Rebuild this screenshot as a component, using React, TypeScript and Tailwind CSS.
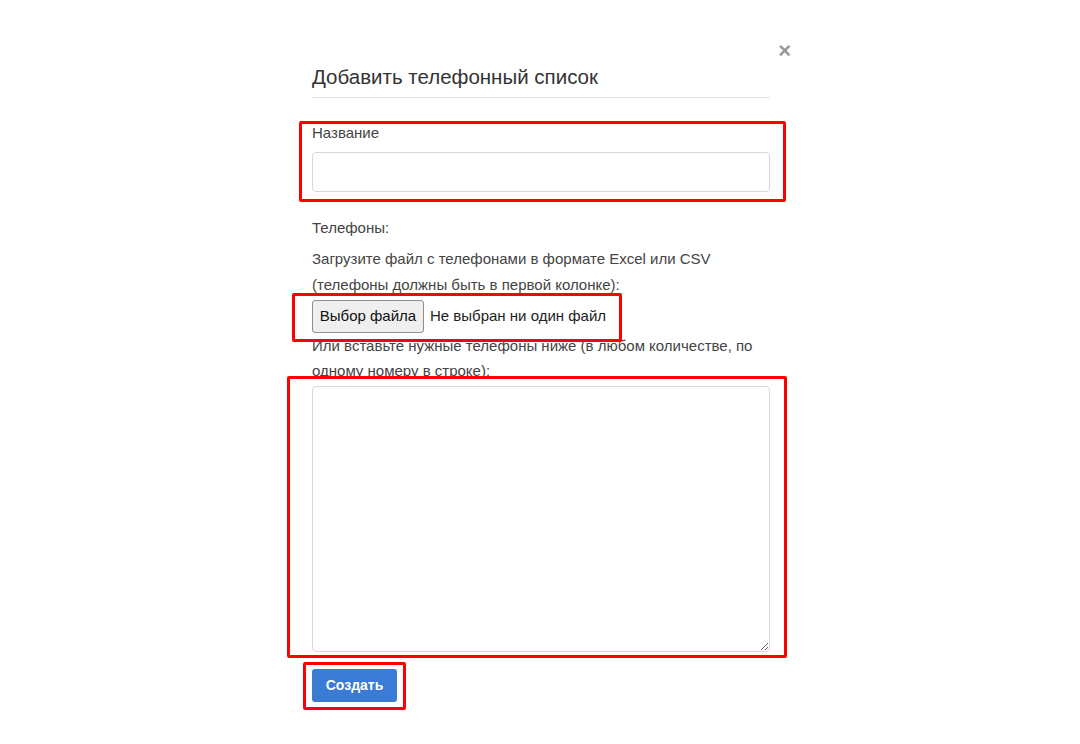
import React from 'react';

const font = { fontFamily: '"Liberation Sans", Arial, sans-serif' };

const App: React.FC = () => {
  return (
    <div className="relative w-[1080px] h-[744px] bg-white overflow-hidden" style={font}>
      <div className="ml-[312px] w-[486px] flex flex-col">
        {/* close */}
        <div className="mt-[40px] h-[22px] flex justify-end pr-[7px]">
          <span className="text-[22px] leading-[22px] font-bold text-[#999]">×</span>
        </div>

        <div className="w-[458px] flex flex-col">
          <h4 className="mt-[2px] text-[20.5px] leading-[26px] text-[#333]">Добавить телефонный список</h4>
          <div className="mt-[7px] border-t border-[#e5e5e5]" />

          <label className="mt-[25px] text-[15px] leading-[20px] text-[#444]">Название</label>
          <input
            type="text"
            className="mt-[9px] h-[40px] w-full rounded-[4px] border border-[#d5d8dc] outline-none px-3 text-[15px]"
          />

          <div className="mt-[26px] text-[15px] leading-[20px] text-[#444]">Телефоны:</div>
          <p className="mt-[8px] text-[15px] leading-[26px] text-[#444]">
            Загрузите файл с телефонами в формате Excel или CSV (телефоны должны быть в первой колонке):
          </p>

          {/* file picker */}
          <div className="mt-[2px] flex items-center h-[33px] text-[15px]">
            <button className="h-[33px] w-[112px] rounded-[3px] border border-[#8f8f8f] bg-[#efefef] text-[15px] text-[#111]">
              Выбор файла
            </button>
            <span className="ml-[6px] text-[#222]">Не выбран ни один файл</span>
          </div>

          <p className="text-[15px] leading-[25px] text-[#444]">
            Или вставьте нужные телефоны ниже (в любом количестве, по одному номеру в строке):
          </p>
          <textarea className="mt-[3px] h-[266px] w-full rounded-[4px] border border-[#d5d8dc] outline-none px-3 py-2 text-[15px]" />

          <div className="mt-[17px]">
            <button className="h-[33px] w-[85px] rounded-[3px] bg-[#3a7bd5] text-white text-[14px] font-semibold">
              Создать
            </button>
          </div>
        </div>
      </div>

      {/* annotation highlights */}
      <div className="absolute left-[299px] top-[121px] w-[487px] h-[81px] border-[3px] border-[#ff0000] rounded-[2px] pointer-events-none" />
      <div className="absolute left-[292px] top-[293px] w-[330px] h-[49px] border-[3px] border-[#ff0000] rounded-[2px] pointer-events-none" />
      <div className="absolute left-[287px] top-[376px] w-[500px] h-[282px] border-[3px] border-[#ff0000] rounded-[2px] pointer-events-none" />
      <div className="absolute left-[303px] top-[662px] w-[103px] h-[48px] border-[3px] border-[#ff0000] rounded-[2px] pointer-events-none" />
    </div>
  );
};

export default App;
